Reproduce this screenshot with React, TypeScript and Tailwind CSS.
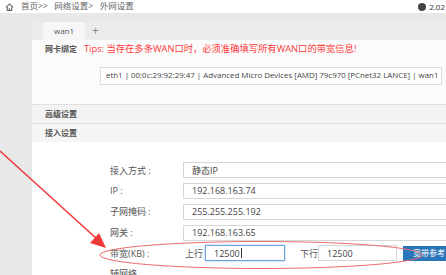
import React from "react";

const font = { fontFamily: '"Open Sans", "Noto Sans CJK SC", sans-serif' };

function Field({ label, value }: { label: string; value: string }) {
  return (
    <div className="flex items-center h-[20.75px]">
      <div className="w-[73px] pl-[78px] box-content text-[9px] text-[#555] whitespace-nowrap">{label}</div>
      <div className="flex-1 h-[16px] border border-[#d6d6d6] bg-white pl-[8px] flex items-center text-[9px] text-[#444] mr-[-10px]">
        {value}
      </div>
    </div>
  );
}

export default function App() {
  return (
    <div className="relative w-[446px] h-[275px] overflow-hidden bg-[#e8e8e8]" style={font}>
      {/* top bar */}
      <div className="h-[13px] bg-white flex items-center pl-[5px] pr-0 text-[8px] text-[#666]">
        <svg width="9" height="8" viewBox="0 0 10 9" className="mr-[7px]">
          <path d="M1 5 L5 1 L9 5" fill="none" stroke="#666" strokeWidth="1.2" />
          <path d="M2.5 4.5 V8.5 H7.5 V4.5" fill="none" stroke="#666" strokeWidth="1.2" />
          <rect x="4.2" y="6" width="1.6" height="2.5" fill="#666" />
        </svg>
        <span className="whitespace-nowrap text-[8.5px]">首页&gt;&gt;&nbsp;&nbsp;&nbsp;网络设置&gt;&nbsp;&nbsp;&nbsp;外网设置</span>
        <div className="ml-auto flex items-center whitespace-nowrap text-[#333]">
          <span className="w-[8px] h-[8px] rounded-full bg-[#444] mr-[3px]" />
          <span className="mr-[1px]">2.02</span>
        </div>
      </div>

      <div className="flex">
        <div className="w-[32px] shrink-0" />
        <div className="flex-1 mt-[9px] bg-[#fbfbfb] h-[262px]">
          {/* tabs */}
          <div className="h-[18px] bg-[#ececec] flex items-end pl-[11px]">
            <div className="w-[42px] h-[18px] bg-[#f6f6f6] flex items-center justify-center text-[8px] text-[#555]">wan1</div>
            <div className="ml-[7px] h-[18px] flex items-center text-[12px] text-[#888] leading-none">+</div>
          </div>
          {/* 网卡绑定 */}
          <div className="h-[18px] flex items-center pl-[13px]">
            <span className="text-[8px] text-[#555] font-bold w-[39px]">网卡绑定</span>
            <span className="text-[9.3px] text-[#ff3a3a] whitespace-nowrap">Tips: 当存在多条WAN口时，必须准确填写所有WAN口的带宽信息!</span>
          </div>
          <div className="pt-[9px] pl-[68px] pr-[11px]">
            <div className="h-[18px] border border-[#dcdcdc] bg-white flex items-center pl-[5px] text-[7.9px] text-[#444] whitespace-nowrap overflow-hidden">
              eth1 | 00:0c:29:92:29:47 | Advanced Micro Devices [AMD] 79c970 [PCnet32 LANCE] | wan1
            </div>
          </div>
          <div className="h-[19px]" />
          <div className="h-[19px] border-t border-[#e0e0e0] bg-[#f3f3f3] flex items-center pl-[13px] text-[8px] text-[#555] font-bold">高级设置</div>
          <div className="h-[19px] border-t border-[#e0e0e0] bg-[#f5f5f5] flex items-center pl-[13px] text-[8px] text-[#555] font-bold">接入设置</div>
          <div className="bg-white pt-[18px] h-[200px]">
            <Field label="接入方式 :" value="静态IP" />
            <Field label="IP :" value="192.168.163.74" />
            <Field label="子网掩码 :" value="255.255.255.192" />
            <Field label="网关 :" value="192.168.163.65" />
            <div className="flex items-center h-[20.75px]">
              <div className="w-[73px] pl-[78px] box-content text-[9px] text-[#555] whitespace-nowrap">带宽(KB) :</div>
              <span className="text-[9px] text-[#555] w-[22px] pl-[2px] box-border">上行</span>
              <div className="w-[80px] h-[16px] border border-[#6fa3dd] shadow-[0_0_2px_#8bb8ea] bg-white pl-[8px] flex items-center text-[9px] text-[#444]">
                12500<span className="w-px h-[10px] bg-[#333] ml-px" />
              </div>
              <span className="text-[9px] text-[#555] ml-[15px] w-[18px]">下行</span>
              <div className="w-[79px] h-[16px] border border-[#d6d6d6] bg-white pl-[8px] flex items-center text-[9px] text-[#444]">12500</div>
              <div className="ml-[6px] w-[50px] h-[15px] bg-[#2a76b8] flex items-center pl-[10px] text-[8px] text-white whitespace-nowrap">宽带参考</div>
            </div>
            <div className="flex items-center h-[20px]">
              <div className="pl-[78px] text-[9px] leading-none text-[#555] whitespace-nowrap">辅网络</div>
            </div>
          </div>
        </div>
      </div>

      {/* annotations */}
      <svg className="absolute inset-0 pointer-events-none" width="446" height="275" viewBox="0 0 446 275">
        <ellipse cx="261" cy="255" rx="161" ry="13.5" fill="none" stroke="#ec6b6b" strokeWidth="1" />
        <line x1="0" y1="151" x2="97" y2="239" stroke="#f03a3a" strokeWidth="1.6" />
        <polygon points="106,248 90,243 99,233" fill="#f03a3a" />
      </svg>
    </div>
  );
}
